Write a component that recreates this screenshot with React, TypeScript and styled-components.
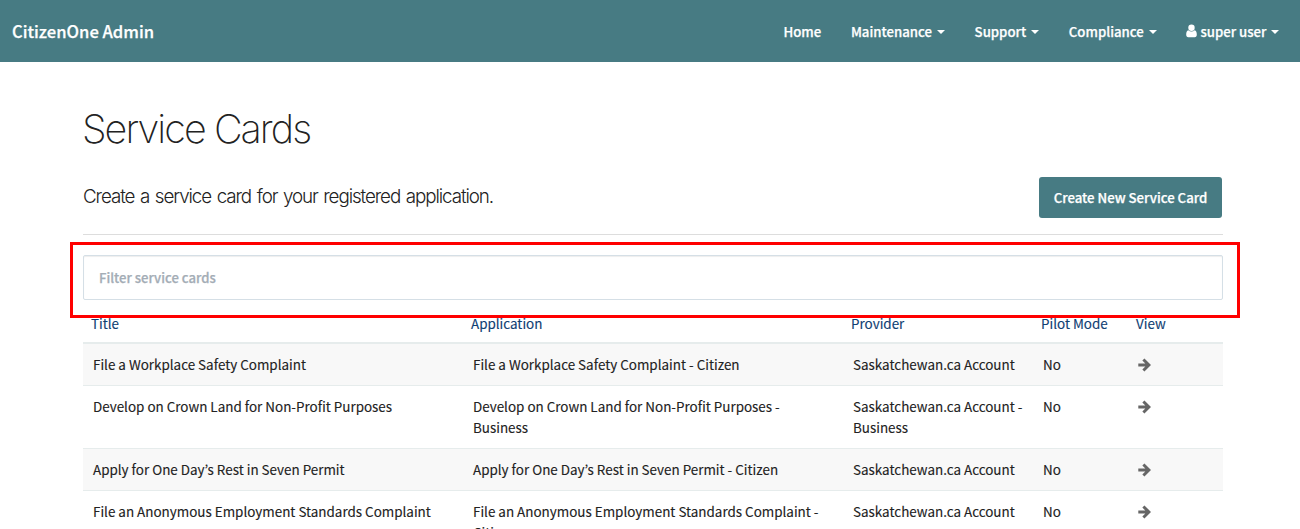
import React from "react";
import styled, { createGlobalStyle, css } from "styled-components";

const GlobalStyle = createGlobalStyle`
  * { box-sizing: border-box; }
  body {
    margin: 0;
    background: #fff;
    color: #222;
    font-family: "Noto Sans CJK KR", "Noto Sans", sans-serif;
    font-size: 13.43px;
    line-height: 21px;
  }
`;

const strong = css`
  font-weight: 500;
  -webkit-text-stroke: 0.25px currentColor;
`;

const Page = styled.div`
  height: 529px;
  overflow: hidden;
`;

const Navbar = styled.header`
  display: flex;
  align-items: center;
  justify-content: space-between;
  height: 62px;
  padding: 0 20.6px 0 12px;
  background: #477b83;
  color: #fff;
`;

const Brand = styled.a`
  ${strong}
  font-size: 16.6px;
`;

const Nav = styled.nav`
  display: flex;
  gap: 29.7px;
`;

const NavItem = styled.a`
  ${strong}
  display: flex;
  align-items: center;
  font-size: 13.2px;
  white-space: nowrap;
`;

const Caret = styled.span`
  margin: 2px 0 0 5px;
  border-top: 4px solid #fff;
  border-left: 4px solid transparent;
  border-right: 4px solid transparent;
`;

const UserGlyph = styled.svg`
  width: 11px;
  height: 14px;
  margin-right: 3px;
  fill: currentColor;
`;

const Container = styled.main`
  width: 1140px;
  margin-left: 83px;
  padding-top: 43px;
`;

const Heading = styled.h1`
  margin: 0;
  font-family: Inter, "Liberation Sans", sans-serif;
  font-size: 39.5px;
  font-weight: 200;
  line-height: 49px;
  height: 48px;
  letter-spacing: -1.95px;
  text-indent: -1px;
`;

const Intro = styled.div`
  display: flex;
  justify-content: space-between;
  height: 82px;
  padding: 24px 1px 0 0;
  border-bottom: 1px solid #ddd;
`;

const Lead = styled.p`
  margin: 6px 0 0;
  font-family: Inter, "Liberation Sans", sans-serif;
  font-size: 18.8px;
  font-weight: 260;
  line-height: 28px;
  letter-spacing: -1.08px;
  word-spacing: 1.4px;
`;

const PrimaryButton = styled.button`
  width: 183px;
  height: 41px;
  padding: 0;
  border: 0;
  border-radius: 3px;
  background: #477b83;
  color: #fff;
  font: inherit;
  font-size: 13.2px;
  ${strong}
`;

const Filter = styled.div`
  position: relative;
  margin-top: 20px;
`;

const FilterInput = styled.input`
  display: block;
  width: 100%;
  height: 45px;
  padding: 0 15px;
  border: 1px solid #d5dfe6;
  border-radius: 2px;
  box-shadow: inset 0 1px 1px rgba(0, 0, 0, 0.07);
  font: inherit;
  font-size: 13.1px;
  ${strong}
  &::placeholder { color: #a4adb6; opacity: 1; }
`;

const Highlight = styled.div`
  position: absolute;
  inset: -13px -17px -18px -13px;
  border: 3px solid #f00;
  pointer-events: none;
`;

const Table = styled.div`
  margin-top: 8px;
  -webkit-text-stroke: 0.12px currentColor;
`;

const Row = styled.div<{ $striped?: boolean }>`
  display: grid;
  grid-template-columns: 380px 380px 190px 95px 95px;
  padding: 10px 0;
  border-bottom: 1px solid #e6ecec;
  background: ${(p) => (p.$striped ? "#f8f8f8" : "#fff")};
`;

const HeadRow = styled(Row)`
  padding: 5px 0 8px;
  border-bottom: 2px solid #e6ecec;
  color: #0f4073;
`;

const HeadCell = styled.div`
  padding: 0 8px;
`;

const Cell = styled.div`
  padding: 0 10px;
`;

const ArrowGlyph = styled.svg`
  display: block;
  width: 13px;
  height: 14px;
  margin-top: 4px;
  fill: none;
  stroke: #666;
  stroke-width: 3;
`;

const navItems = ["Home", "Maintenance", "Support", "Compliance"];
const columns = ["Title", "Application", "Provider", "Pilot Mode", "View"];
const cards = [
  ["File a Workplace Safety Complaint", "File a Workplace Safety Complaint - Citizen", "Saskatchewan.ca Account", "No"],
  ["Develop on Crown Land for Non-Profit Purposes", "Develop on Crown Land for Non-Profit Purposes - Business", "Saskatchewan.ca Account - Business", "No"],
  ["Apply for One Day’s Rest in Seven Permit", "Apply for One Day’s Rest in Seven Permit - Citizen", "Saskatchewan.ca Account", "No"],
  ["File an Anonymous Employment Standards Complaint", "File an Anonymous Employment Standards Complaint - Citizen", "Saskatchewan.ca Account", "No"],
];

const Arrow = () => (
  <ArrowGlyph viewBox="0 0 13 14">
    <path d="M0.300 7H10.500M5.400 1.500 10.900 7 5.400 12.500" />
  </ArrowGlyph>
);

export default function App() {
  return (
    <Page>
      <GlobalStyle />
      <Navbar>
        <Brand>CitizenOne Admin</Brand>
        <Nav>
          {navItems.map((item) => (
            <NavItem key={item}>
              {item}
              {item !== "Home" && <Caret />}
            </NavItem>
          ))}
          <NavItem>
            <UserGlyph viewBox="0 0 11 14">
              <circle cx="5.500" cy="3.800" r="3.200" />
              <path d="M2.300 6.300C.8 6.700 0.200 8.400 0.200 10.800 0.200 12.300 1 13.200 2.300 13.200H8.700C10 13.200 10.800 12.300 10.800 10.800 10.800 8.400 10.200 6.700 8.700 6.300 6.800 8 4.200 8 2.300 6.300Z" />
            </UserGlyph>
            super user
            <Caret />
          </NavItem>
        </Nav>
      </Navbar>
      <Container>
        <Heading>Service Cards</Heading>
        <Intro>
          <Lead>Create a service card for your registered application.</Lead>
          <PrimaryButton>Create New Service Card</PrimaryButton>
        </Intro>
        <Filter>
          <FilterInput placeholder="Filter service cards" />
          <Highlight />
        </Filter>
        <Table>
          <HeadRow>
            {columns.map((c) => <HeadCell key={c}>{c}</HeadCell>)}
          </HeadRow>
          {cards.map((card, i) => (
            <Row key={card[0]} $striped={i % 2 === 0}>
              {card.map((text) => <Cell key={text}>{text}</Cell>)}
              <Cell><Arrow /></Cell>
            </Row>
          ))}
        </Table>
      </Container>
    </Page>
  );
}
